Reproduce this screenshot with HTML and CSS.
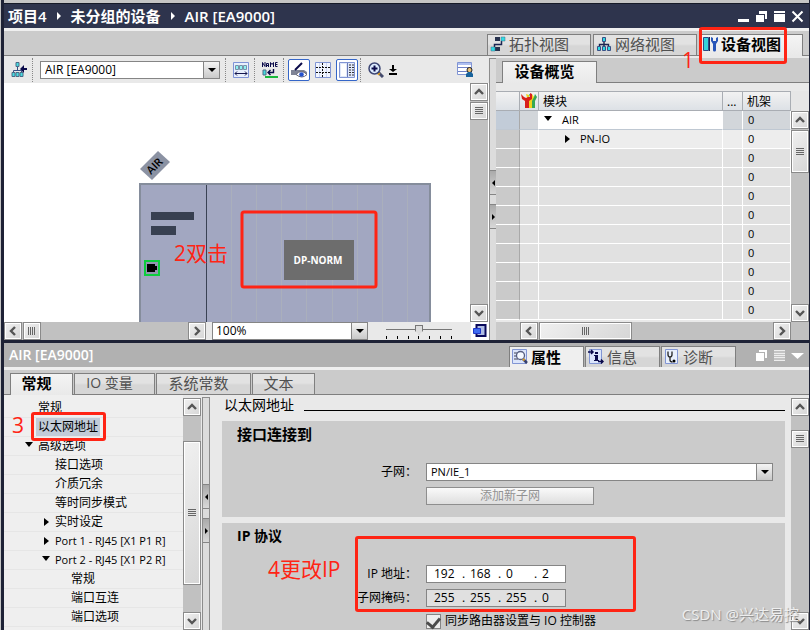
FILE: index.html
```html
<!DOCTYPE html>
<html lang="zh-CN">
<head>
<meta charset="utf-8">
<title>项目4 - AIR [EA9000]</title>
<link rel="stylesheet" href="styles.css">
</head>
<body>
<svg class="defs" aria-hidden="true">
  <symbol id="up" viewBox="0 0 16 16"><path d="M4 10l4-4 4 4" fill="none" stroke="#555" stroke-width="2.4"/></symbol>
  <symbol id="down" viewBox="0 0 16 16"><path d="M4 6l4 4 4-4" fill="none" stroke="#555" stroke-width="2.4"/></symbol>
  <symbol id="left" viewBox="0 0 16 16"><path d="M10 4L6 8l4 4" fill="none" stroke="#555" stroke-width="2.4"/></symbol>
  <symbol id="right" viewBox="0 0 16 16"><path d="M6 4l4 4-4 4" fill="none" stroke="#555" stroke-width="2.4"/></symbol>
  <symbol id="grip-v" viewBox="0 0 16 16"><path d="M4 4.5h8M4 6.5h8M4 8.5h8M4 10.5h8" stroke="#666"/></symbol>
  <symbol id="grip-h" viewBox="0 0 16 16"><path d="M4.5 4v8M6.5 4v8M8.5 4v8M10.5 4v8" stroke="#666"/></symbol>
</svg>

<div class="app">
  <section class="editor">
    <header class="titlebar">
      <span>项目4</span><i class="crumb"></i><span>未分组的设备</span><i class="crumb"></i><span>AIR [EA9000]</span>
      <div class="window-buttons">
        <button aria-label="最小化"><svg viewBox="0 0 13 13"><path d="M1 9h11v3H1z" fill="#fff"/></svg></button>
        <button aria-label="还原"><svg viewBox="0 0 13 13"><path d="M4 1h8v8h-2V4H4z" fill="#fff"/><path d="M1 5h8v7H1z" fill="#fff"/></svg></button>
        <button aria-label="最大化"><svg viewBox="0 0 13 13"><path d="M1 1h11v2H1zM1 4h11v8H1z" fill="#fff"/></svg></button>
        <button aria-label="关闭"><svg viewBox="0 0 13 13"><path d="M1.500 1.500l10 10M11.500 1.500l-10 10" stroke="#fff" stroke-width="2"/></svg></button>
      </div>
    </header>

    <nav class="view-tabs">
      <button class="tab view-tab">
        <svg viewBox="0 0 16 16"><path d="M4.500 12V8.500h7V5" fill="none" stroke="#1b2450" stroke-width="1.500"/><path d="M5 1h5v4H5zM5 11h5v4H5z" fill="#28334f"/><path d="M11 1h4v4h-4zM1 11h4v4H1z" fill="#2fdbe4" stroke="#4a6a86" stroke-width=".5"/></svg>拓扑视图</button>
      <button class="tab view-tab">
        <svg viewBox="0 0 16 16"><path d="M3.500 10V8.500h9V10M8 5v5" fill="none" stroke="#1b2450" stroke-width="1.400"/><path d="M6.500 1.500h3v4h-3zM1.500 10.500h3v4h-3zM6.500 10.500h3v4h-3zM11.500 10.500h3v4h-3z" fill="#2fdbe4" stroke="#394f86"/></svg>网络视图</button>
      <button class="tab view-tab active">
        <svg viewBox="0 0 16 16"><path d="M1.500 1.500h5v13h-5z" fill="#34d3dc" stroke="#2c4a86"/><path d="M7.500 1v14" stroke="#1b2450"/><path d="M9 1v4l2 3v6c0 2 3 2 3 0V8l2-3V1l-2 1v3h-3V2z" fill="#2855b8"/></svg>设备视图
        <span class="mark-box mark-view"></span><span class="mark-text mark-one">1</span>
      </button>
    </nav>

    <div class="workspace">
      <div class="device-pane">
        <div class="toolbar">
          <svg class="tool" viewBox="0 0 16 16"><path d="M6.500 4v5M2.500 11V8.500h8V11" fill="none" stroke="#394f86"/><path d="M5 .5h3v4H5zM1 10.500h3v4H1zM5 10.500h3v4H5zM9 10.500h3v4H9z" fill="#46dce0" stroke="#4a6a86"/><path d="M16 6v2h-3v3L9 7l4-4v3z" fill="#0a0a4a"/></svg>
          <i class="sep"></i>
          <span class="combo device-combo"><select aria-label="设备"><option>AIR [EA9000]</option></select></span>
          <i class="sep"></i>
          <svg class="tool" viewBox="0 0 16 16"><path d="M.5.5h15v15H.5z" fill="#e8effc" stroke="#7f93d6"/><path d="M2.500 3.500h3v4h-3zM6.500 3.500h3v4h-3zM10.500 3.500h3v4h-3z" fill="#8ff0f0" stroke="#7890a8"/><path d="M2 11.500h12M4 9.500l-2 2 2 2M12 9.500l2 2-2 2" fill="none" stroke="#15164e"/></svg>
          <i class="sep"></i>
          <svg class="tool" viewBox="0 0 16 16"><path d="M.5 5V.5L3 4.500V0M4.500 5V1.500h2V5M4.500 3.500h2M8.500 5V.5l1.500 2 1.500-2V5M15.500.5h-2v4h2M13.500 2.500h2" fill="none" stroke="#0a0a4a"/><path d="M1 8h3v5H1z" fill="#46dce0" stroke="#4a6a86"/><path d="M11.500 7v3.500H6M8.500 8L6 10.500 8.500 13" fill="none" stroke="#0a0a4a" stroke-width="1.400"/><path d="M3 14h13v2H3z" fill="#19b83c"/></svg>
          <i class="sep"></i>
          <div class="toggles">
            <button class="toggle" aria-label="显示地址"><svg viewBox="0 0 16 16"><path d="M0 8h13l3 2v3H0z" fill="#7f8496"/><path d="M4 8l7-7" stroke="#0a0a4a" stroke-width="2"/><path d="M5 12.500q5-6 11 0-5 5-11 0z" fill="#fff" stroke="#667"/><circle cx="10.500" cy="12.500" r="2.300" fill="#2451cc"/></svg></button>
            <svg class="tool" viewBox="0 0 16 16"><path d="M.5.5h15v15H.5z" fill="#f2f6ff" stroke="#8195d4"/><path d="M4.500 1v14M11.500 1v14" stroke="#cdd8f5"/><path d="M7.500 1v14M1 5.500h14M1 10.500h14" stroke="#111" stroke-dasharray="2 1"/></svg>
            <button class="toggle" aria-label="显示表格"><svg viewBox="0 0 16 16"><path d="M.5.5h15v15H.5z" fill="#dfe7fa" stroke="#8195d4"/><path d="M2 2h5v12H2z" fill="#fff"/><path d="M8.500 1v14" stroke="#6879b7"/><path d="M10 3h5M10 5.500h5M10 8h5M10 10.500h5M10 13h5" stroke="#333" stroke-dasharray="2 1"/></svg></button>
          </div>
          <i class="sep"></i>
          <svg class="tool" viewBox="0 0 16 16"><path d="M10 10l5 5" stroke="#454c6e" stroke-width="3"/><path d="M9.500 10.500l2 2" stroke="#e0a020" stroke-width="2.500"/><circle cx="6.500" cy="6.500" r="5.500" fill="#dcecff" stroke="#3c4674" stroke-width="1.500"/><path d="M3.500 6.500h6M6.500 3.500v6" stroke="#0a0a4a" stroke-width="2"/></svg>
          <svg class="tool-small" viewBox="0 0 8 12"><path d="M3 1h2v4h3L4 8 0 5h3zM0 9h8v2H0z"/></svg>
          <svg class="tool tool-end" viewBox="0 0 16 16"><path d="M.5.5h14v12H.5z" fill="#fff" stroke="#8195d4"/><path d="M1 1h13v2H1z" fill="#aebff0"/><path d="M1 5.500h13M1 9.500h9" stroke="#6f82c6"/><circle cx="12.500" cy="8" r="2.500" fill="#e9c27a" stroke="#222"/><path d="M9 15v-3l2-2h3l2 2v3z" fill="#18639c"/></svg>
        </div>

        <div class="canvas-row">
          <svg class="canvas" role="img" aria-label="设备 AIR">
            <g transform="translate(-4 -83)">
              <path d="M140 169l18-18 12 11-18 18z" fill="#8b92a3"/>
              <text class="tag-name" transform="translate(151 175) rotate(-45)">AIR</text>
              <path d="M140 184h290v150H140z" fill="#a2a7c1" stroke="#858d9c" stroke-width="2"/>
              <path d="M231.500 185v140M256.500 185v140M281.500 185v140M306.500 185v140M332.500 185v140M357.500 185v140M382.500 185v140M407.500 185v140" stroke="#aaafbc"/>
              <path d="M206.500 185v140" stroke="#3a4254"/>
              <path d="M151 212h43v8h-43zM151 226h25v9h-25z" fill="#384051"/>
              <path d="M145 261h14v14h-14z" fill="#9298b0" stroke="#0cce3c" stroke-width="2"/>
              <path d="M147 264h8v2h2v4h-2v2h-8z"/>
              <path d="M284 240h70v40h-70z" fill="#6d6d6d"/>
              <text class="module-name" x="318" y="264" text-anchor="middle">DP-NORM</text>
              <rect x="242" y="212" width="134" height="75" rx="2" fill="none" stroke="#ff2414" stroke-width="3"/>
              <text class="mark-svg" x="174" y="261">2双击</text>
            </g>
          </svg>
          <div class="vscroll canvas-scroll">
            <button aria-label="向上"><svg><use href="#up"/></svg></button>
            <button class="thumb" aria-label="滑块"><svg><use href="#grip-v"/></svg></button>
            <button class="last" aria-label="向下"><svg><use href="#down"/></svg></button>
          </div>
        </div>

        <div class="canvas-foot">
          <div class="hscroll foot-scroll">
            <button aria-label="向左"><svg><use href="#left"/></svg></button>
            <button class="thumb" aria-label="滑块"><svg><use href="#grip-h"/></svg></button>
            <button class="last" aria-label="向右"><svg><use href="#right"/></svg></button>
          </div>
          <span class="combo zoom-combo"><select aria-label="缩放"><option>100%</option></select></span>
          <div class="zoom-slider">
            <input type="range" min="0" max="6" value="3" aria-label="缩放比例">
            <div class="ticks"><i></i><i></i><i></i><i></i><i></i><i></i><i></i></div>
          </div>
          <svg class="overview-icon" viewBox="0 0 18 18"><path d="M0 0h18v18H0z" fill="#fff"/><path d="M5.500 3h9v11h-9z" fill="#b0bde4" stroke="#0a0a5c" stroke-width="2"/><path d="M2.500 6.500h7v5h-7z" fill="#3f6cf0" stroke="#1f37c8"/></svg>
        </div>
      </div>

      <div class="splitter"><button class="split-left" aria-label="向左折叠"></button><button class="split-right" aria-label="向右折叠"></button></div>

      <div class="overview">
        <nav class="overview-tabs"><button class="tab active">设备概览</button></nav>
        <div class="overview-body">
          <table class="modules">
            <colgroup><col class="c-head"><col class="c-icon"><col><col class="c-dots"><col class="c-rack"></colgroup>
            <thead><tr><th></th><th class="icon-cell"><svg viewBox="0 0 16 16"><path d="M8 1l3 1v3l2-1 1-3 2 3-2 4v7h-4V8z" fill="#35a853"/><path d="M5 1l3 1v3l2 0 1-4 2 3-2 4v7H7V8z" fill="#f0d21c"/><path d="M0 1l1 5 3 2v7h4V8l3-2V1L9 0v4H7L5 5 3 4z" fill="#d8201c"/></svg></th><th>模块</th><th>...</th><th>机架</th></tr></thead>
            <tbody>
              <tr class="selected"><td></td><td></td><td><i class="arrow open"></i>AIR</td><td></td><td>0</td></tr>
              <tr class="child"><td></td><td></td><td><i class="arrow"></i>PN-IO</td><td></td><td>0</td></tr>
              <tr><td></td><td></td><td></td><td></td><td>0</td></tr>
              <tr><td></td><td></td><td></td><td></td><td>0</td></tr>
              <tr><td></td><td></td><td></td><td></td><td>0</td></tr>
              <tr><td></td><td></td><td></td><td></td><td>0</td></tr>
              <tr><td></td><td></td><td></td><td></td><td>0</td></tr>
              <tr><td></td><td></td><td></td><td></td><td>0</td></tr>
              <tr><td></td><td></td><td></td><td></td><td>0</td></tr>
              <tr><td></td><td></td><td></td><td></td><td>0</td></tr>
              <tr><td></td><td></td><td></td><td></td><td>0</td></tr>
            </tbody>
          </table>
          <div class="vscroll table-scroll">
            <button aria-label="向上"><svg><use href="#up"/></svg></button>
            <button class="thumb" aria-label="滑块"><svg><use href="#grip-v"/></svg></button>
            <button class="last" aria-label="向下"><svg><use href="#down"/></svg></button>
          </div>
        </div>
        <div class="overview-foot">
          <div class="hscroll">
            <button aria-label="向左"><svg><use href="#left"/></svg></button>
            <button class="thumb" aria-label="滑块"><svg><use href="#grip-h"/></svg></button>
            <button class="last" aria-label="向右"><svg><use href="#right"/></svg></button>
          </div>
        </div>
      </div>
    </div>
  </section>

  <section class="inspector">
    <header class="inspector-head">
      <h2>AIR [EA9000]</h2>
      <button class="tab info-tab active"><svg viewBox="0 0 16 16"><path d="M.5.5h14v14H.5z" fill="#dbe5fb" stroke="#8195d4"/><path d="M2 4h4M2 7h3M2 10h4" stroke="#445"/><path d="M11 10l4 4" stroke="#35406e" stroke-width="2.500"/><circle cx="8.500" cy="6.500" r="4" fill="#f5f9ff" stroke="#555d80" stroke-width="1.300"/><path d="M11 10l1.500 1.500" stroke="#e0a020" stroke-width="2"/></svg>属性</button>
      <button class="tab info-tab"><svg viewBox="0 0 16 16"><path d="M1.500.5h12v14h-12z" fill="#dbe5fb" stroke="#8195d4"/><path d="M0 3h5M3 1l2 2-2 2M10 12.500h5M13 10.500l2 2-2 2" fill="none" stroke="#0a0a4a" stroke-width="1.500"/><path d="M7 3h3v2H7zM6 6h4v5h1v1H6v-1h1V7H6z" fill="#0a0a4a"/></svg>信息</button>
      <button class="tab info-tab"><svg viewBox="0 0 16 16"><path d="M1.500.5h12v14h-12z" fill="#e8effc" stroke="#8195d4"/><path d="M4 2.500v3q0 2.500 2 2.500t2-2.500v-3M6 8v3q0 2 2.500 2" fill="none" stroke="#222" stroke-width="1.300"/><circle cx="10" cy="12" r="1.500"/></svg>诊断</button>
      <div class="window-buttons">
        <button aria-label="浮动"><svg viewBox="0 0 13 13"><path d="M4 1h8v8h-2V3H4z" fill="#fff"/><path d="M1 4h8v8H1z" fill="#fff"/></svg></button>
        <button aria-label="列表"><svg viewBox="0 0 13 13"><path d="M1 1h11v11H1z" fill="#c4c4c4"/><path d="M1 1.500h11M1 4.500h11M1 6.500h11M1 8.500h11M1 11.500h11" stroke="#eee"/></svg></button>
        <button aria-label="折叠"><svg viewBox="0 0 13 13"><path d="M0 4h13L6.500 10z" fill="#fff"/></svg></button>
      </div>
    </header>

    <nav class="prop-tabs">
      <button class="tab active prop-general">常规</button>
      <button class="tab prop-io">IO 变量</button>
      <button class="tab prop-const">系统常数</button>
      <button class="tab prop-general">文本</button>
    </nav>

    <div class="properties">
      <ul class="tree">
        <li class="level-1">常规</li>
        <li class="level-1"><span class="picked">以太网地址</span><span class="mark-box mark-tree"></span><span class="mark-text mark-three">3</span></li>
        <li class="level-1"><i class="arrow open"></i>高级选项</li>
        <li class="level-2">接口选项</li>
        <li class="level-2">介质冗余</li>
        <li class="level-2">等时同步模式</li>
        <li class="level-2"><i class="arrow"></i>实时设定</li>
        <li class="level-2 port"><i class="arrow"></i>Port 1 - RJ45 [X1 P1 R]</li>
        <li class="level-2 port"><i class="arrow open"></i>Port 2 - RJ45 [X1 P2 R]</li>
        <li class="level-3">常规</li>
        <li class="level-3">端口互连</li>
        <li class="level-3">端口选项</li>
      </ul>
      <div class="vscroll tree-scroll">
        <button aria-label="向上"><svg><use href="#up"/></svg></button>
        <button class="thumb" aria-label="滑块"><svg><use href="#grip-v"/></svg></button>
        <button class="last" aria-label="向下"><svg><use href="#down"/></svg></button>
      </div>
      <div class="splitter tree-splitter"><button class="split-left" aria-label="向左折叠"></button><button class="split-right" aria-label="向右折叠"></button></div>

      <form class="details">
        <h3>以太网地址</h3>
        <fieldset class="group">
          <h4>接口连接到</h4>
          <div class="field"><label for="subnet">子网：</label><span class="combo subnet-combo"><select id="subnet"><option>PN/IE_1</option></select></span></div>
          <button type="button" class="add-subnet" disabled>添加新子网</button>
        </fieldset>
        <fieldset class="group ip-group">
          <h4>IP 协议</h4>
          <div class="field"><label for="ip1">IP 地址：</label><span class="ip"><input id="ip1" value="192"><b>.</b><input value="168" aria-label="IP 2"><b>.</b><input value="0" aria-label="IP 3"><b>.</b><input value="2" aria-label="IP 4"></span></div>
          <div class="field"><label for="mask1">子网掩码：</label><span class="ip locked"><input id="mask1" value="255" readonly><b>.</b><input value="255" aria-label="掩码 2" readonly><b>.</b><input value="255" aria-label="掩码 3" readonly><b>.</b><input value="0" aria-label="掩码 4" readonly></span></div>
          <label class="sync"><input type="checkbox" checked>同步路由器设置与 IO 控制器</label>
          <span class="mark-box mark-ip"></span><span class="mark-text mark-four">4更改IP</span>
        </fieldset>
      </form>
      <div class="vscroll details-scroll">
        <button aria-label="向上"><svg><use href="#up"/></svg></button>
        <button class="thumb" aria-label="滑块"><svg><use href="#grip-v"/></svg></button>
        <button class="last" aria-label="向下"><svg><use href="#down"/></svg></button>
      </div>
    </div>
  </section>
  <span class="watermark">CSDN @兴达易控</span>
</div>
</body>
</html>
```
FILE: styles.css
```css
:root {
  --dark: #1e2236;
  --line: #7f7f7f;
  --bar: #cbcbcb;
  --pane: #e9e9e9;
  --red: #ff2414;
  --ui: "Open Sans", "Noto Sans CJK SC", sans-serif;
}

* { box-sizing: border-box; }

body {
  margin: 0;
  background: #c5c5c5;
  font: 12px/18px var(--ui);
  color: #000;
}

button, input, select { font: inherit; color: inherit; margin: 0; padding: 0; border: 0; border-radius: 0; }
.defs { position: absolute; width: 0; height: 0; }

.app {
  position: relative;
  display: flex;
  flex-direction: column;
  min-height: 100vh;
  margin-left: 1px;
  border-left: 3px solid var(--dark);
  border-right: 1px solid var(--dark);
  padding-top: 3px;
  background: #c5c5c5;
}

/* title bar */
.titlebar {
  display: flex;
  align-items: center;
  height: 25px;
  padding: 0 5px 0 4px;
  border-top: 1px solid #161a28;
  background: #2e344d;
  color: #fff;
  font-size: 15px;
  font-weight: 600;
}
.crumb {
  margin: 0 10px;
  border: solid transparent;
  border-width: 4px 0 4px 4px;
  border-left-color: #fff;
}
.window-buttons { display: flex; gap: 5px; margin-left: auto; }
.window-buttons button { width: 13px; height: 13px; background: none; }
.window-buttons svg { display: block; width: 13px; height: 13px; }

/* tabs */
.tab {
  position: relative;
  display: flex;
  align-items: center;
  justify-content: center;
  height: 21px;
  padding: 0 10px 2px 0;
  border: 1px solid var(--line);
  border-bottom: 0;
  background: linear-gradient(#e2e2e2 45%, #d6d6d6 55%);
  color: #505050;
  font-size: 15px;
  line-height: 18px;
  white-space: nowrap;
}
.tab svg { flex: none; width: 16px; height: 16px; }
.tab.active { height: 22px; padding-bottom: 4px; background: linear-gradient(#f4f4f4, var(--pane)); color: #000; font-weight: 700; }
.view-tabs {
  display: flex;
  justify-content: flex-end;
  gap: 2px;
  height: 28px;
  padding: 3px 6px 0 0;
  border-top: 3px solid #efefef;
  border-bottom: 1px solid var(--line);
  background: var(--bar);
}
.tab.view-tab { width: 104px; justify-content: flex-start; padding-left: 2px; gap: 3px; }

/* workspace */
.workspace { display: grid; grid-template-columns: 485fr 7px 313fr; background: var(--pane); }
.device-pane { min-width: 0; display: flex; flex-direction: column; }
.toolbar { display: flex; align-items: center; gap: 5px; height: 27px; padding: 0 16px 0 7px; }
.tool { flex: none; width: 16px; height: 16px; }
.tool-small { flex: none; width: 8px; height: 12px; }
.tool-end { margin-left: auto; }
.sep { height: 24px; border-left: 1px dotted #888; margin-right: 2px; }
.toggles { display: flex; align-items: center; gap: 5px; margin: 0 -3px; }
.toggle { display: grid; place-items: center; flex: none; width: 22px; height: 22px; border: 1px solid #3566c8; border-radius: 2px; background: #fff; }
.toggle svg { width: 16px; height: 16px; }

.combo { position: relative; display: block; height: 18px; border: 1px solid #858585; background: #fff; }
.combo select { appearance: none; display: block; width: 100%; height: 16px; padding: 0 20px 0 4px; background: transparent; font-size: 12px; line-height: 16px; }
.combo::after {
  content: "";
  position: absolute;
  inset: 0 0 0 auto;
  width: 15px;
  border-left: 1px solid #858585;
  background: linear-gradient(#f4f4f4, #c9c9c9);
  pointer-events: none;
}
.combo::before {
  content: "";
  position: absolute;
  z-index: 1;
  right: 3px;
  top: 6px;
  border: solid transparent;
  border-width: 4px 4px 0;
  border-top-color: #000;
  pointer-events: none;
}
.device-combo { flex: 0 1 180px; }

.canvas-row { display: flex; height: 239px; background: #fff; }
.canvas { flex: 1; min-width: 0; height: 100%; overflow: hidden; }
.tag-name { font: 600 11px var(--ui); }
.module-name { font: 700 10px var(--ui); fill: #fff; }
.mark-svg { font: 21px var(--ui); fill: var(--red); }

/* scroll bars */
.vscroll, .hscroll { display: flex; background: #c1c1c1; }
.vscroll { flex: none; flex-direction: column; width: 18px; }
.hscroll { flex: 1; height: 18px; }
.vscroll button, .hscroll button {
  display: grid;
  place-items: center;
  flex: none;
  width: 18px;
  height: 18px;
  border: 1px solid #8a8a8a;
  box-shadow: inset 0 0 0 1px #fff;
  background: linear-gradient(135deg, #f0f0f0, #d6d6d6);
}
.vscroll svg, .hscroll svg { width: 16px; height: 16px; }
.vscroll .last { margin-top: auto; }
.hscroll .last { margin-left: auto; }
.canvas-scroll { margin-right: 1px; }
.canvas-scroll .thumb { margin-top: 1px; }

.canvas-foot { display: flex; align-items: center; height: 18px; }
.foot-scroll { flex: 0 1 202px; }
.foot-scroll .thumb { margin-left: 1px; }
.zoom-combo { flex: 0 1 156px; margin-left: 6px; }
.zoom-combo select { padding-left: 3px; }
.zoom-slider { width: 66px; margin-left: 18px; }
.zoom-slider input { appearance: none; display: block; width: 100%; height: 12px; background: linear-gradient(#777, #777) 0 5px / 100% 1px no-repeat; }
.zoom-slider input::-webkit-slider-thumb { appearance: none; width: 8px; height: 10px; border: 1px solid #777; background: #ddd; clip-path: polygon(0 0, 100% 0, 100% 65%, 50% 100%, 0 65%); }
.ticks { display: flex; justify-content: space-between; height: 3px; }
.ticks i { width: 1px; background: #000; }
.overview-icon { width: 18px; height: 18px; margin-left: auto; }

.splitter { display: flex; flex-direction: column; gap: 9px; margin-top: 2px; padding-top: 111px; border: solid #8c8c8c; border-width: 1px 0 0 1px; background: #dcdcdc; }
.splitter button { display: flex; align-items: center; justify-content: center; width: 100%; height: 25px; border: solid #858585; border-width: 1px 0; background: linear-gradient(#aaa, #d8d8d8); }
.splitter button::before { content: ""; border: solid transparent; border-width: 3px 0; }
.splitter .split-left::before { border-right: 3px solid #000; }
.splitter .split-right::before { border-left: 3px solid #000; }

/* device overview */
.overview { min-width: 0; display: flex; flex-direction: column; padding-top: 2px; }
.overview-tabs { height: 25px; padding: 3px 6px 0; border-bottom: 1px solid var(--line); background: var(--bar); }
.overview-tabs .tab { width: 95px; }
.overview-body { display: flex; height: 239px; padding-top: 8px; overflow: hidden; }
.modules { flex: 1; align-self: flex-start; min-width: 0; table-layout: fixed; border-collapse: separate; border-spacing: 0; font-size: 11px; }
.c-head { width: 24px; }
.c-icon { width: 19px; }
.c-dots { width: 20px; }
.c-rack { width: 48px; }
.modules th { height: 20px; padding: 0 4px; border: solid #a9adb3; border-width: 1px 1px 1px 0; background: linear-gradient(#f2f2f2, #dde1e6); font-size: 12px; font-weight: 400; line-height: 17px; text-align: left; }
.modules .icon-cell { padding: 0 1px; }
.icon-cell svg { display: block; width: 16px; height: 16px; }
.modules td { height: 19px; padding: 0 5px; border: solid #fff; border-width: 0 1px 1px 0; background: #e1e1e1; line-height: 18px; white-space: nowrap; }
.modules td:first-child { background: #cacaca; border-right-color: #a9a9a9; }
.modules .child td { background: #ededed; }
.modules .child td:first-child { background: #cacaca; }
.modules .selected td { background: #d2d6da; border-bottom-color: #bfc8d2; }
.modules .selected td:first-child { background: #c2ccd8; }
.modules .selected td:nth-child(3) { padding-left: 4px; background: #fff; }
.modules .child td:nth-child(3) { padding-left: 26px; }
.arrow { display: inline-block; width: 20px; height: 8px; }
.arrow::before { content: ""; display: block; width: 0; margin-left: 5px; border: solid transparent; border-width: 4px 0 4px 5px; border-left-color: #000; }
.arrow.open::before { margin-left: 1px; border-width: 5px 4px 0; border-color: #000 transparent transparent; }
.modules .child .arrow { width: 15px; }
.modules .child .arrow::before { margin-left: 0; }
.modules .selected .arrow { width: 19px; }
.table-scroll { padding-top: 20px; background: linear-gradient(#e6e6e6 20px, #c1c1c1 20px); }
.table-scroll .thumb { height: 43px; margin-top: 1px; }
.overview-foot { display: flex; height: 18px; padding: 0 18px 0 24px; margin-top: auto; background: linear-gradient(90deg, #cacaca 24px, #c1c1c1 24px); }
.overview-foot .thumb { width: 93px; margin-left: 1px; }

/* inspector */
.inspector { flex: 1; display: flex; flex-direction: column; border-top: 3px solid var(--dark); background: var(--pane); }
.inspector-head { display: flex; align-items: flex-end; gap: 1px; height: 27px; padding-right: 5px; border-bottom: 3px solid #efefef; background: #b1b1b1; }
.inspector-head h2 { margin: 0 auto 0 0; padding-left: 5px; color: #fff; font-size: 14px; font-weight: 600; line-height: 24px; }
.tab.info-tab { width: 75px; justify-content: flex-start; gap: 3px; padding: 0 0 0 2px; }
.tab.info-tab.active { height: 21px; background: #efefef; }
.inspector-head .window-buttons { align-self: center; margin-left: 18px; }
.prop-tabs { display: flex; gap: 1px; height: 25px; padding: 3px 6px 0; border-bottom: 1px solid var(--line); background: var(--bar); }
.prop-general { width: 63px; }
.tab.prop-io { width: 81px; font-size: 14px; }
.prop-const { width: 95px; }

.properties { flex: 1; display: flex; }
.tree { flex: none; width: 179px; margin: 0; padding: 4px 0 0; list-style: none; background: #efefef; font-size: 12px; }
.tree li { position: relative; height: 19px; border-bottom: 1px solid #e6e6e6; line-height: 18px; white-space: nowrap; }
.level-1 { padding-left: 34px; }
.level-2 { padding-left: 51px; }
.level-3 { padding-left: 67px; }
.port { font-size: 11px; }
.tree .arrow { width: 14px; margin-left: -14px; }
.tree .arrow::before { margin-left: 3px; }
.tree .arrow.open::before { margin-left: 1px; }
.picked { display: inline-block; margin-left: -2px; padding: 0 2px; background: #c2ccd8; }
.tree-scroll { margin-top: 3px; }
.tree-scroll .thumb { height: 144px; margin-top: 25px; }
.tree-splitter { width: 8px; margin-left: 1px; padding-top: 86px; border-right: 1px solid #8c8c8c; }

.details { flex: 1; min-width: 0; padding: 0 6px 0 12px; }
.details h3 { display: flex; align-items: flex-end; gap: 10px; margin: 0 0 6px; padding-left: 2px; font-size: 14px; font-weight: 400; line-height: 20px; }
.details h3::after { content: ""; flex: 1; margin-bottom: 4px; border-bottom: 1px solid #000; }
.group { position: relative; min-width: 0; height: 96px; margin: 0 0 6px; padding: 3px 12px 0 15px; border: 0; background: #cbcbcb; }
.ip-group { height: 107px; margin-bottom: 0; }
.group h4 { margin: 0 0 19px; font-size: 15px; line-height: 20px; }
.ip-group h4 { font-size: 14px; }
.field { display: flex; align-items: center; height: 18px; margin-bottom: 6px; }
.field label { flex: 0 0 189px; padding-right: 9px; text-align: right; white-space: nowrap; }
.subnet-combo { flex: 1; }
.subnet-combo select { font-size: 11px; }
.add-subnet { display: block; width: 168px; height: 18px; margin-left: 189px; border: 1px solid #8e8e8e; background: linear-gradient(#fafafa, #dedede); color: #929292; font-size: 12px; line-height: 16px; }
.ip { display: flex; width: 140px; height: 18px; padding-left: 7px; border: 1px solid #858585; background: #fff; }
.ip input { flex: none; width: 28px; height: 16px; background: transparent; line-height: 16px; }
.ip input:last-child { flex: 1; width: 0; }
.ip b { flex: none; width: 8px; font-weight: 400; line-height: 16px; }
.ip.locked { background: #e0e0e0; }
.sync { display: flex; align-items: center; gap: 4px; height: 16px; margin-left: 189px; white-space: nowrap; }
.sync input { appearance: none; width: 15px; height: 15px; border: 1px solid #858585; background: #eee; }
.sync input:checked::before { content: ""; display: block; width: 6px; height: 10px; margin: 0 auto; border: solid #4c4c4c; border-width: 0 3px 3px 0; transform: rotate(40deg); }
.details-scroll { margin-top: 3px; }
.details-scroll .thumb { margin-top: 14px; }

/* annotations */
.mark-box { position: absolute; border: 3px solid var(--red); border-radius: 3px; z-index: 2; }
.mark-text { position: absolute; z-index: 2; color: var(--red); font-size: 21px; font-weight: 400; line-height: 24px; }
.mark-view { left: -1px; top: -8px; width: 88px; height: 37px; }
.mark-one { left: -18px; top: 13px; }
.mark-tree { left: 27px; top: -6px; width: 75px; height: 29px; }
.mark-three { left: 8px; top: -5px; }
.mark-ip { left: 133px; top: 13px; width: 281px; height: 76px; }
.mark-four { left: 46px; top: 34px; }
.watermark { position: absolute; right: 10px; bottom: 4px; z-index: 3; color: #eee; font-size: 15px; line-height: 24px; text-shadow: 1px 1px 1px #888; }
```
